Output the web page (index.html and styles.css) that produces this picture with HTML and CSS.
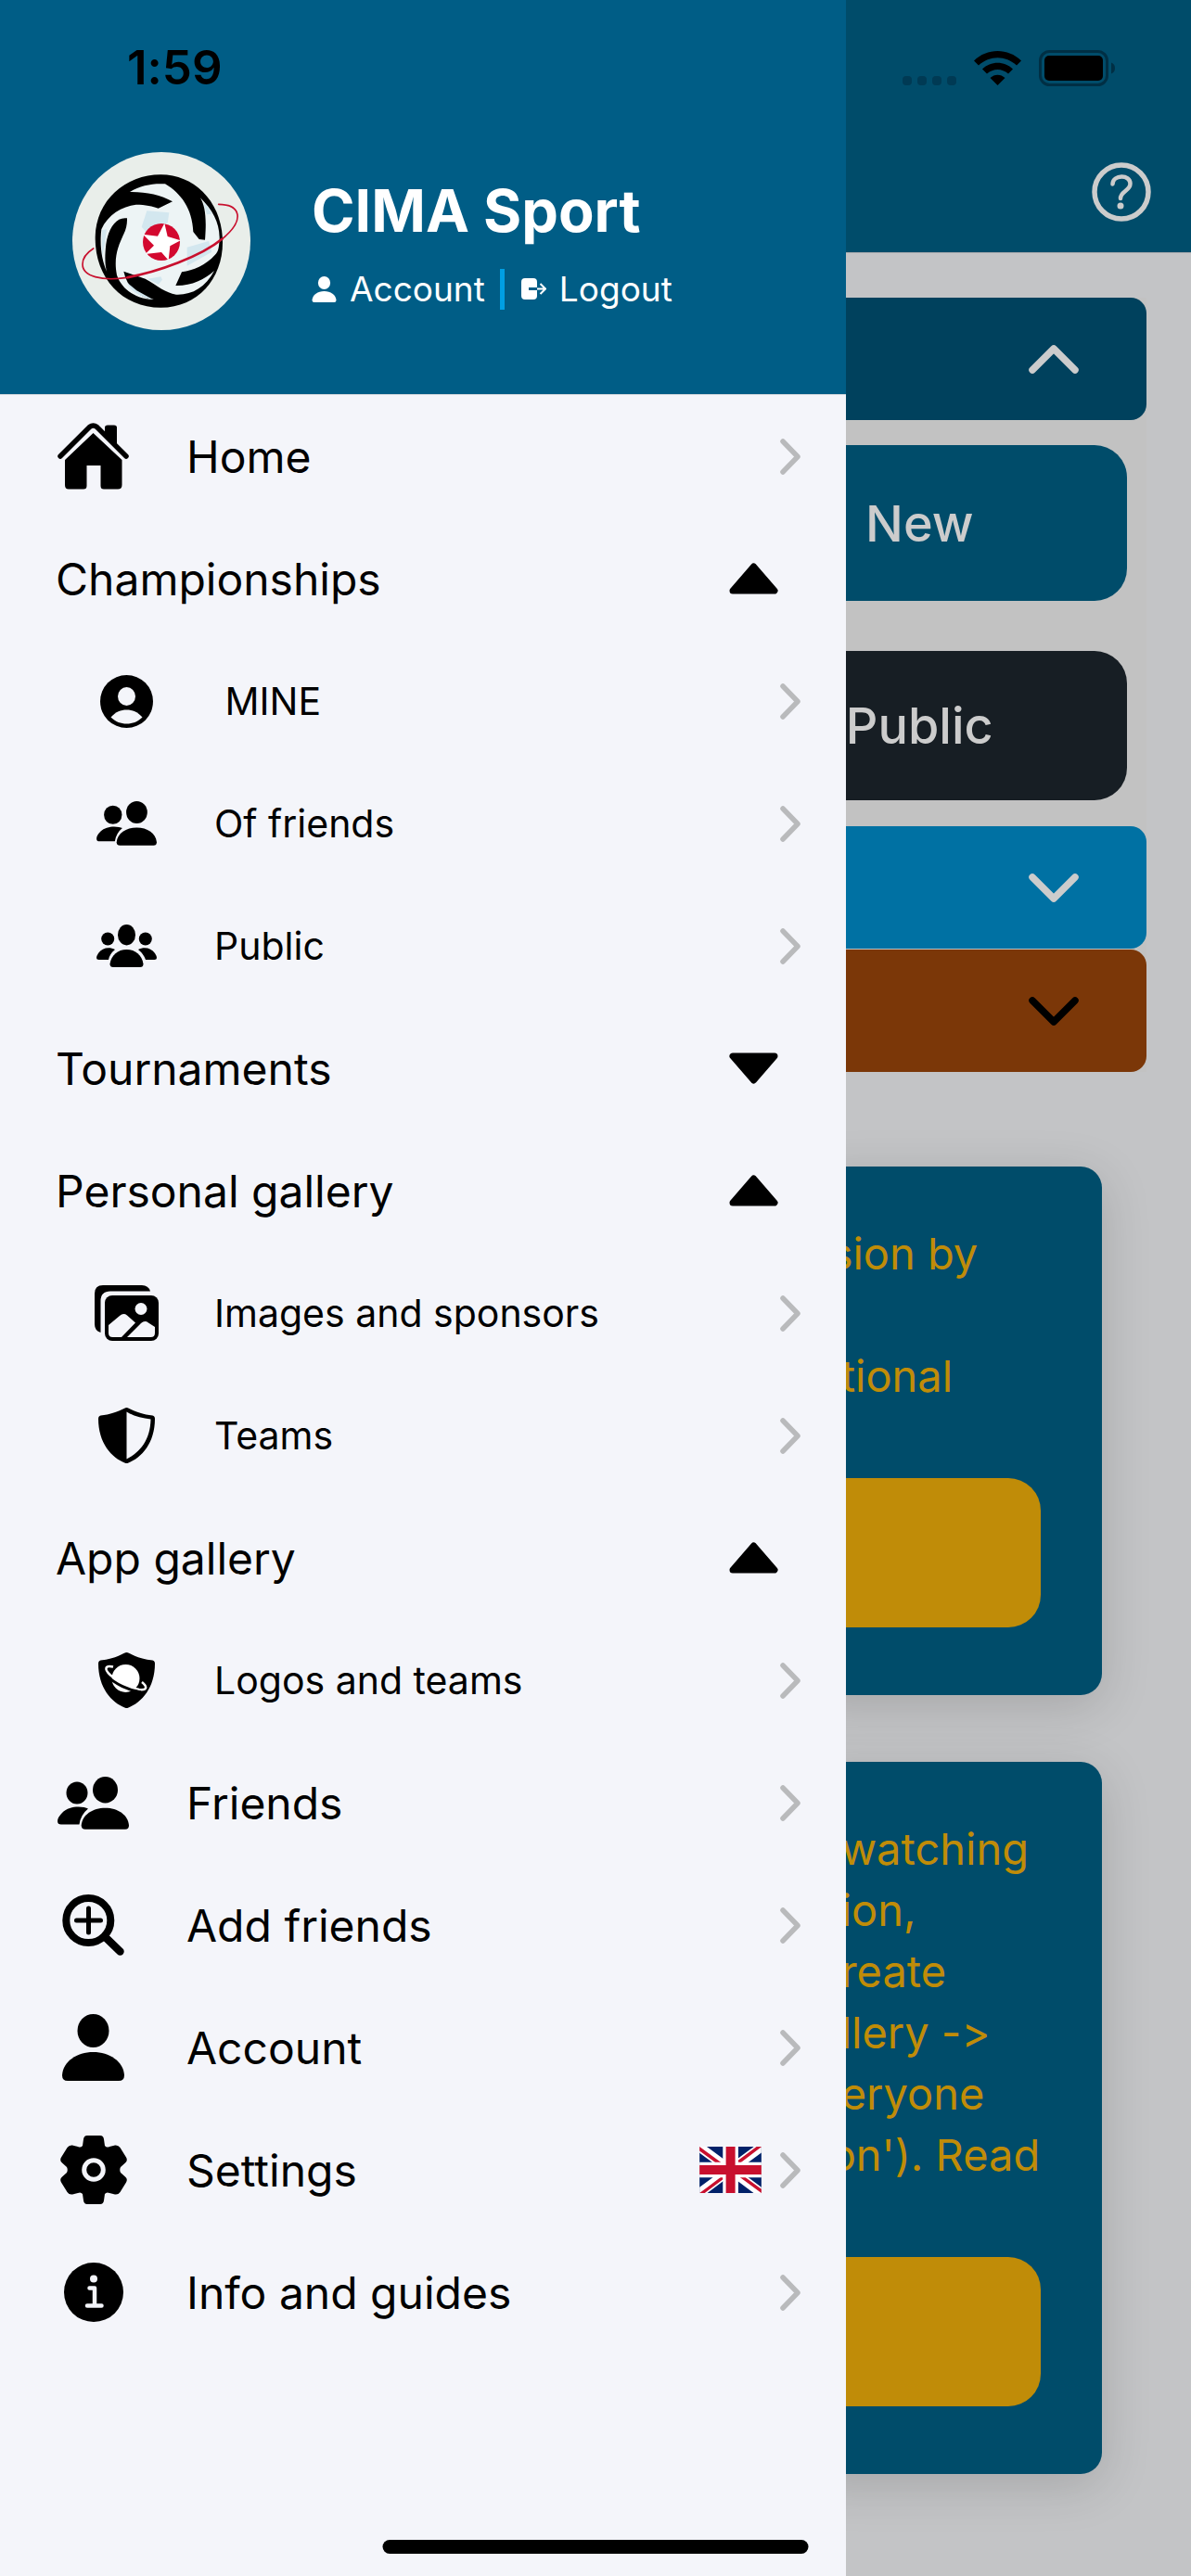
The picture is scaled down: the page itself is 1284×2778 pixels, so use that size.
FILE: index.html
```
<!DOCTYPE html>
<html lang="en">
<head>
    <meta charset="UTF-8">
    <meta name="viewport" content="width=device-width, initial-scale=1.0">
    <title>CIMA Sport</title>
    <link rel="stylesheet" href="styles.css">
</head>
<body>
    <!-- shared icons -->
    <svg class="sprite" aria-hidden="true">
        <symbol id="chevron" viewBox="0 0 22 39">
            <path d="M3 3L19 19.500L3 36" fill="none" stroke="currentColor" stroke-width="5.500" stroke-linecap="round" stroke-linejoin="round"/>
        </symbol>
        <symbol id="chevron-down" viewBox="0 0 54 31">
            <path d="M4 4L27 27L50 4" fill="none" stroke="currentColor" stroke-width="7.500" stroke-linecap="round" stroke-linejoin="round"/>
        </symbol>
        <symbol id="caret" viewBox="0 0 53 34">
            <path d="M4 30L26.500 4L49 30Z" fill="currentColor" stroke="currentColor" stroke-width="7" stroke-linejoin="round"/>
        </symbol>
        <symbol id="person" viewBox="0 0 67 72">
            <ellipse cx="33.500" cy="18" rx="17" ry="18"/>
            <path d="M0 66C1 51 16 41 33.500 41S66 51 67 66Q67 72 61 72H6Q0 72 0 66Z"/>
        </symbol>
        <symbol id="people" viewBox="0 0 77 57">
            <ellipse cx="21" cy="17.500" rx="11.500" ry="12"/>
            <path d="M33 34.500C28 32 13 30.500 5 39Q0 44 0 48Q0 51.500 4 51.500H23.500Q25 41 33 34.500Z"/>
            <ellipse cx="51.500" cy="14.200" rx="13.500" ry="14.200"/>
            <path d="M25.700 52.500C26.500 41 38 33.700 51.500 33.700S76 41 77 52.500Q77 56.700 73 56.700H30Q25.700 56.700 25.700 52.500Z"/>
        </symbol>
        <symbol id="shield" viewBox="0 0 61 60">
            <path d="M30.500 0C33 0 42 7 58.500 8.500Q61 9 61 12C61 38 47 54 32 59.700Q30.500 60.300 29 59.700C14 54 0 38 0 12Q0 9 2.500 8.500C19 7 28 0 30.500 0Z"/>
        </symbol>
    </svg>

    <div class="app">
        <!-- side menu -->
        <aside class="drawer">
            <header class="drawer_header">
                <div class="clock">1:59</div>
                <div class="profile">
                    <svg class="logo" viewBox="54 42 576 576" role="img" aria-label="CIMA Sport logo">
                        <circle cx="342" cy="330" r="288" fill="#e9eeea"/>
                        <path d="M128 320C128 200 225 115 340 115C450 115 540 205 540 335C540 450 460 545 340 545C215 545 128 450 128 320Z"/>
                        <path fill="#edf4f5" d="M148 292C168 245 215 217 260 212C290 212 315 218 332 224L378 202C340 180 290 170 240 171C275 150 310 143 354 145C405 175 442 225 445 300L464 324L483 326C489 255 483 215 468 190C508 230 530 270 530 322C528 355 526 365 515 375C485 408 445 425 408 430L388 474C440 475 480 455 513 426C485 480 440 505 390 503C355 497 330 475 290 452L220 428C232 480 265 510 318 519C265 518 215 490 198 440C186 380 205 340 219 310Q232 285 231 256C195 250 170 290 163 340C158 385 160 415 166 430C148 390 142 340 148 292Z"/>
                        <g fill="#d3e7ef">
                            <path d="M295 232L367 238L362 272L318 284L298 306L278 284Z"/>
                            <path d="M150 295L165 292L158 345L150 380Z"/>
                            <path d="M425 350L495 330L505 365L425 410Z"/>
                            <path d="M478 205C495 222 502 235 504 242L489 244Z"/>
                            <path d="M298 452L340 445L345 455L332 470Z"/>
                            <path d="M232 465L262 490L315 519C270 510 240 490 232 465Z"/>
                        </g>
                        <circle cx="342" cy="333" r="60" fill="#d3092f"/>
                        <path fill="#fff" d="M352 272L362 315L404 328L370 346L365 392L342 366L290 372L318 344L282 308L330 314Z"/>
                        <path fill="none" stroke="#c8102e" stroke-width="8" d="M540 322C470 380 330 430 230 448"/>
                        <path fill="none" stroke="#c8102e" stroke-width="5" stroke-linecap="round" d="M527 211C600 212 612 262 540 322M230 448C150 460 87 445 87 405C87 385 100 368 122 354"/>
                    </svg>
                    <div class="profile_info">
                        <h1>CIMA Sport</h1>
                        <div class="profile_links">
                            <a href="#account">
                                <svg width="27" height="28" fill="currentColor"><use href="#person"/></svg>
                                Account
                            </a>
                            <a href="#logout">
                                <svg width="27" height="24" viewBox="0 0 27 24" fill="currentColor">
                                    <path d="M4 0H13Q17 0 17 4V10H8V13H17V19Q17 23 13 23H4Q0 23 0 19V4Q0 0 4 0Z"/>
                                    <path d="M17 11.500H25M20.500 6L26 11.500L20.500 17" fill="none" stroke="currentColor" stroke-width="2"/>
                                </svg>
                                Logout
                            </a>
                        </div>
                    </div>
                </div>
            </header>

            <nav class="menu">
                <a class="item" href="#home">
                    <span class="icon">
                        <svg width="77" height="72" viewBox="0 0 77 72">
                            <path d="M3 36L34.500 4.500Q38.500 1.500 42.500 4.500L74 36" fill="none" stroke="#000" stroke-width="5.500" stroke-linecap="round"/>
                            <path d="M51 11V5Q51 2.500 54 2.500H61Q64 2.500 64 5V25Z"/>
                            <path d="M38.500 11L69.500 40V67Q69.500 71.500 65 71.500H50Q46.500 71.500 46.500 68V46H31.500V68Q31.500 71.500 28 71.500H12Q8 71.500 8 67V40Z"/>
                        </svg>
                    </span>
                    <span class="label">Home</span>
                    <svg class="arrow"><use href="#chevron"/></svg>
                </a>

                <button class="item group" type="button" aria-expanded="true">
                    <span class="label">Championships</span>
                    <svg class="caret"><use href="#caret"/></svg>
                </button>
                <a class="item sub" href="#mine">
                    <span class="icon">
                        <svg width="57" height="57" viewBox="0 0 57 57">
                            <circle cx="28.500" cy="28.500" r="28.500"/>
                            <g fill="#f4f5fa">
                                <ellipse cx="28.500" cy="23" rx="9.500" ry="10"/>
                                <path d="M11.500 45.500C17 39.500 22 37.500 28.500 37.500S40 39.500 45.500 45.500C40 50.500 35 52.500 28.500 52.500S17 50.500 11.500 45.500Z"/>
                            </g>
                        </svg>
                    </span>
                    <span class="label">&nbsp;MINE</span>
                    <svg class="arrow"><use href="#chevron"/></svg>
                </a>
                <a class="item sub" href="#of-friends">
                    <span class="icon"><svg width="65" height="48"><use href="#people"/></svg></span>
                    <span class="label">Of friends</span>
                    <svg class="arrow"><use href="#chevron"/></svg>
                </a>
                <a class="item sub" href="#public">
                    <span class="icon">
                        <svg width="65" height="46" viewBox="0 0 65 46">
                            <circle cx="12.200" cy="15.500" r="7"/>
                            <circle cx="52.800" cy="15.500" r="7"/>
                            <path d="M20 27C14 24 6 25 2 31Q0 34 0 36Q0 38 2.500 38H13Q14 32 20 27Z"/>
                            <path d="M45 27C51 24 59 25 63 31Q65 34 65 36Q65 38 62.500 38H53Q51 32 45 27Z"/>
                            <ellipse cx="32.500" cy="11.200" rx="9.500" ry="11.200"/>
                            <path d="M14.500 42.500C16 33 23 27 32.500 27S49 33 50.500 42.500Q50.500 46 47 46H18Q14.500 46 14.500 42.500Z"/>
                        </svg>
                    </span>
                    <span class="label">Public</span>
                    <svg class="arrow"><use href="#chevron"/></svg>
                </a>

                <button class="item group" type="button" aria-expanded="false">
                    <span class="label">Tournaments</span>
                    <svg class="caret down"><use href="#caret"/></svg>
                </button>

                <button class="item group" type="button" aria-expanded="true">
                    <span class="label">Personal gallery</span>
                    <svg class="caret"><use href="#caret"/></svg>
                </button>
                <a class="item sub" href="#images">
                    <span class="icon">
                        <svg width="69" height="60" viewBox="0 0 69 60">
                            <path d="M6.500 51Q0 49 0 42V9Q0 0 9 0H51Q58 0 60 6.500H17Q6.500 6.500 6.500 17Z"/>
                            <rect x="11" y="11" width="58" height="49" rx="8"/>
                            <g fill="#f4f5fa">
                                <circle cx="50" cy="25.500" r="6.500"/>
                                <path d="M15 43L27 33Q31 29.500 35 32.500L44 40.500L29 56H19.500Q15 56 15 51.500Z"/>
                                <path d="M35 56L50 41Q54 37.500 58 40.500L65 45V51.500Q65 56 60.500 56Z"/>
                            </g>
                        </svg>
                    </span>
                    <span class="label">Images and sponsors</span>
                    <svg class="arrow"><use href="#chevron"/></svg>
                </a>
                <a class="item sub" href="#teams">
                    <span class="icon">
                        <svg width="61" height="60" viewBox="0 0 61 60">
                            <use href="#shield"/>
                            <path fill="#f4f5fa" d="M30.500 4.500C38 9 47 11.500 56.500 12.500C56 35 45 48 30.500 55.500Z"/>
                        </svg>
                    </span>
                    <span class="label">Teams</span>
                    <svg class="arrow"><use href="#chevron"/></svg>
                </a>

                <button class="item group" type="button" aria-expanded="true">
                    <span class="label">App gallery</span>
                    <svg class="caret"><use href="#caret"/></svg>
                </button>
                <a class="item sub" href="#logos">
                    <span class="icon">
                        <svg width="61" height="60" viewBox="0 0 61 60">
                            <use href="#shield"/>
                            <circle cx="29.500" cy="28" r="15" fill="#fff"/>
                            <path d="M16 15.500C7 13.500 6 18 13 24.500C22 32 34 38.500 44 40C53 41 53 37 47 32" fill="none" stroke="#fff" stroke-width="2.500"/>
                            <path d="M9 25C18 34 33 41 46 43" fill="none" stroke="#000" stroke-width="3"/>
                        </svg>
                    </span>
                    <span class="label">Logos and teams</span>
                    <svg class="arrow"><use href="#chevron"/></svg>
                </a>

                <a class="item" href="#friends">
                    <span class="icon"><svg width="77" height="57"><use href="#people"/></svg></span>
                    <span class="label">Friends</span>
                    <svg class="arrow"><use href="#chevron"/></svg>
                </a>
                <a class="item" href="#add-friends">
                    <span class="icon">
                        <svg width="67" height="66" viewBox="0 0 67 66" fill="none" stroke="#000" stroke-linecap="round">
                            <circle cx="28.300" cy="28" r="24" stroke-width="8"/>
                            <path d="M28.500 15V41M15.500 28H41.500" stroke-width="5"/>
                            <path d="M47 46.500L62.500 61.500" stroke-width="8.500"/>
                        </svg>
                    </span>
                    <span class="label">Add friends</span>
                    <svg class="arrow"><use href="#chevron"/></svg>
                </a>
                <a class="item" href="#account">
                    <span class="icon"><svg width="67" height="72"><use href="#person"/></svg></span>
                    <span class="label">Account</span>
                    <svg class="arrow"><use href="#chevron"/></svg>
                </a>
                <a class="item" href="#settings">
                    <span class="icon">
                        <svg width="72" height="74" viewBox="0 0 72 74">
                            <path d="M29 0H43Q46.500 0 47 4L48 11Q50 13.500 53 12L59 10.500Q62.500 10 64.500 13L71 23.500Q73 27 70 29.500L65 34Q63.500 37 65 40L70 44.500Q73 47 71 50.500L64.500 61Q62.500 64 59 63.500L53 62Q50 60.500 48 63L47 70Q46.500 74 43 74H29Q25.500 74 25 70L24 63Q22 60.500 19 62L13 63.500Q9.500 64 7.500 61L1 50.500Q-1 47 2 44.500L7 40Q8.500 37 7 34L2 29.500Q-1 27 1 23.500L7.500 13Q9.500 10 13 10.500L19 12Q22 13.500 24 11L25 4Q25.500 0 29 0Z"/>
                            <circle cx="36" cy="37" r="10.300" fill="none" stroke="#f4f5fa" stroke-width="5"/>
                        </svg>
                    </span>
                    <span class="label">Settings</span>
                    <svg class="flag" viewBox="0 0 640 480" role="img" aria-label="English">
                        <path fill="#012169" d="M0 0h640v480H0z"/>
                        <path fill="#fff" d="m75 0 244 181L562 0h78v62L400 241l240 178v61h-80L320 301 81 480H0v-60l239-178L0 64V0z"/>
                        <path fill="#c8102e" d="m424 281 216 159v40L369 281zm-184 20 6 35L54 480H0zM640 0v3L391 191l2-44L590 0zM0 0l239 176h-60L0 42z"/>
                        <path fill="#fff" d="M241 0v480h160V0zM0 160v160h640V160z"/>
                        <path fill="#c8102e" d="M0 193v96h640v-96zM273 0v480h96V0z"/>
                    </svg>
                    <svg class="arrow"><use href="#chevron"/></svg>
                </a>
                <a class="item" href="#info">
                    <span class="icon">
                        <svg width="64" height="64" viewBox="0 0 64 64">
                            <circle cx="32" cy="32" r="32"/>
                            <circle cx="32" cy="17.500" r="4" fill="#f4f5fa"/>
                            <path d="M27.500 27.500H33V46.500M25 46.500H40.500" fill="none" stroke="#f4f5fa" stroke-width="4.500" stroke-linecap="round" stroke-linejoin="round"/>
                        </svg>
                    </span>
                    <span class="label">Info and guides</span>
                    <svg class="arrow"><use href="#chevron"/></svg>
                </a>
            </nav>
        </aside>

        <!-- page behind the menu -->
        <main class="page">
            <header class="topbar">
                <div class="status">
                    <svg width="58" height="37" viewBox="0 0 58 37" fill="#003a54">
                        <rect x="0" y="27" width="10" height="10" rx="4"/>
                        <rect x="16" y="27" width="10" height="10" rx="4"/>
                        <rect x="32" y="27" width="10" height="10" rx="4"/>
                        <rect x="48" y="27" width="10" height="10" rx="4"/>
                    </svg>
                    <svg width="51" height="37" viewBox="0 0 51 37">
                        <path d="M0 10.500C14-3.500 37-3.500 51 10.500L46 15.500C34 4.500 17 4.500 5 15.500Z"/>
                        <path d="M9 19.500C18 10.500 33 10.500 42 19.500L37 24.500C30 18.500 21 18.500 14 24.500Z"/>
                        <path d="M17.500 29C22 24.500 29 24.500 33.500 29L25.500 37Z"/>
                    </svg>
                    <svg width="82" height="39" viewBox="0 0 82 39">
                        <rect x="1.500" y="1.500" width="72" height="36" rx="10" fill="none" stroke="#002f44" stroke-width="3"/>
                        <rect x="6" y="6" width="63" height="27" rx="5"/>
                        <path d="M78 13.500Q82 15 82 19.500T78 25.500Z" fill="#002f44"/>
                    </svg>
                </div>
                <button class="help" type="button" aria-label="Help">
                    <svg width="64" height="64" viewBox="0 0 64 64" fill="none" stroke="currentColor">
                        <circle cx="32" cy="32" r="29" stroke-width="5.500"/>
                        <path d="M22.500 23.500C23 13 41.500 13 41.500 23C41.500 31 31 31 31 39" stroke-width="4.500" stroke-linecap="round"/>
                        <circle cx="31" cy="47" r="3.500" fill="currentColor" stroke="none"/>
                    </svg>
                </button>
            </header>

            <section class="accordion">
                <button class="panel dark" type="button" aria-label="Collapse" aria-expanded="true">
                    <svg class="up"><use href="#chevron-down"/></svg>
                </button>
                <div class="panel_body">
                    <button class="btn btn_new" type="button">New</button>
                    <button class="btn btn_public" type="button">Public</button>
                </div>
                <button class="panel blue" type="button" aria-label="Expand" aria-expanded="false">
                    <svg><use href="#chevron-down"/></svg>
                </button>
                <button class="panel brown" type="button" aria-label="Expand" aria-expanded="false">
                    <svg><use href="#chevron-down"/></svg>
                </button>
            </section>

            <section class="cards">
                <article class="card">
                    <p><span class="cut">sion by</span><br><br>tional</p>
                    <button class="card_btn" type="button" aria-label="Open"></button>
                </article>
                <article class="card">
                    <p>watching<br>ion,<br>reate<br>llery -&gt;<br>eryone<br><span class="cut">on'). Read</span></p>
                    <button class="card_btn" type="button" aria-label="Open"></button>
                </article>
            </section>
        </main>

        <div class="home_bar"></div>
    </div>
</body>
</html>
```
FILE: styles.css
```
* {
    box-sizing: border-box;
}
body {
    margin: 0;
    font-family: Inter, "Liberation Sans", sans-serif;
    font-variant-ligatures: no-contextual;
    color: #000;
    background-color: #c3c4c6;
}
button {
    font: inherit;
    color: inherit;
    border: 0;
    padding: 0;
    background: none;
    cursor: pointer;
}
a {
    color: inherit;
    text-decoration: none;
}
svg {
    display: block;
    flex-shrink: 0;
}
.sprite {
    position: absolute;
    width: 0;
    height: 0;
}
.app {
    position: relative;
    display: grid;
    grid-template-columns: 71% 1fr;
    min-height: 100vh;
}

/* Side menu */
.drawer {
    background-color: #f4f5fa;
}
.drawer_header {
    padding: 42px 0 69px;
    background-color: #005d86;
    border-bottom: 1px solid #d5d9de;
    color: #fff;
}
.clock {
    padding-left: 137px;
    font-size: 51px;
    font-weight: 600;
    line-height: 62px;
    color: #000;
}
.profile {
    display: flex;
    align-items: center;
    gap: 66px;
    padding: 60px 0 0 78px;
}
.logo {
    width: 192px;
    height: 192px;
}
.profile_info {
    display: flex;
    flex-direction: column;
    gap: 23px;
}
.profile_info h1 {
    margin: 0;
    font-size: 63px;
    font-weight: 700;
    line-height: 80px;
}
.profile_links {
    display: flex;
    font-size: 37px;
    line-height: 44px;
}
.profile_links a {
    display: flex;
    align-items: center;
    gap: 14px;
}
.profile_links a + a {
    margin-left: 16px;
    padding-left: 18px;
    border-left: 5px solid #009fe3;
}
.item {
    display: flex;
    align-items: center;
    width: 100%;
    height: 132px;
    padding: 0 49px 0 60px;
    font-size: 48px;
    text-align: left;
}
.item.group {
    padding-right: 73px;
}
.item.sub {
    padding-left: 102px;
    font-size: 41px;
}
.icon {
    display: flex;
    justify-content: center;
    width: 81px;
    margin-right: 60px;
}
.sub .icon {
    width: 69px;
}
.label {
    flex: 1;
}
.arrow {
    width: 22px;
    height: 39px;
    color: #b9babc;
}
.caret {
    width: 53px;
    height: 34px;
}
.caret.down {
    transform: rotate(180deg);
}
.flag {
    width: 67px;
    height: 50px;
    margin-right: 20px;
}

/* Page behind */
.page {
    overflow: hidden;
}
.topbar {
    display: flex;
    flex-direction: column;
    align-items: flex-end;
    padding: 42px 43px 33px;
    background-color: #004c6a;
    border-bottom: 1px solid #a9abae;
}
.status {
    display: flex;
    align-items: center;
    gap: 19px;
    height: 62px;
    margin-right: 39px;
}
.help {
    margin-top: 71px;
    color: #ccc;
}
.accordion {
    margin: 48px 48px 0 0;
    background-color: #c2c2c2;
}
.panel {
    display: flex;
    align-items: center;
    justify-content: flex-end;
    width: 100%;
    height: 132px;
    padding-right: 73px;
    border-radius: 0 17px 17px 0;
    color: #ccc;
}
.panel svg {
    width: 54px;
    height: 31px;
}
.panel .up {
    transform: rotate(180deg);
}
.dark {
    background-color: #00415d;
}
.blue {
    background-color: #0071a3;
}
.brown {
    margin-top: 1px;
    background-color: #7b3708;
    color: #000;
}
.panel_body {
    display: flex;
    flex-direction: column;
    gap: 54px;
    padding: 27px 21px 28px 0;
}
.btn {
    padding-right: 144px;
    border-radius: 0 35px 35px 0;
    font-size: 54px;
    font-weight: 500;
    color: #ccc;
}
.btn_new {
    height: 168px;
    background-color: #004c6a;
}
.btn_public {
    height: 161px;
    background-color: #171e24;
}
.cards {
    display: flex;
    flex-direction: column;
    gap: 72px;
    margin: 102px 96px 0 -48px;
}
.card {
    padding: 61px 66px 73px 43px;
    border-radius: 23px;
    background-color: #004c6a;
    box-shadow: 0 12px 54px rgba(0, 0, 0, 0.15);
}
.card p {
    margin: 0 0 77px;
    font-size: 47px;
    line-height: 66px;
    color: #c08c08;
    white-space: nowrap;
}
/* lines that run further under the menu */
.card .cut {
    margin-left: -12px;
}
.card_btn {
    display: block;
    width: calc(100% + 43px);
    height: 161px;
    margin-left: -43px;
    border-radius: 35px;
    background-color: #c08c08;
}
.home_bar {
    position: absolute;
    bottom: 24px;
    left: 50%;
    width: 459px;
    height: 15px;
    border-radius: 8px;
    background-color: #000;
    transform: translateX(-50%);
}
```
